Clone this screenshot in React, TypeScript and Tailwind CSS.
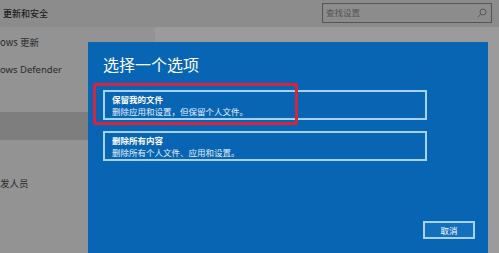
import React from 'react';

const cjk = { fontFamily: '"Noto Sans CJK SC", "Noto Sans", sans-serif' };

function SearchIcon() {
  return (
    <svg width="10" height="10" viewBox="0 0 10 10" fill="none" stroke="#5a5a5a" strokeWidth="1">
      <circle cx="6" cy="4" r="3" />
      <path d="M3.8 6.2 L0.8 9.2" />
    </svg>
  );
}

function OptionCard({ title, desc, highlighted }: { title: string; desc: string; highlighted?: boolean }) {
  return (
    <div className="relative">
      {highlighted && (
        <div className="absolute left-[-10px] top-[-7px] w-[205px] h-[42px] border-[3px] border-[#d3253e] rounded-[2px]" />
      )}
      <div className="w-[324px] h-[30px] border-2 border-[#a7d2f6] pl-[7px] flex flex-col justify-center">
        <div className="text-[8.5px] leading-[11px] font-bold text-white">{title}</div>
        <div className="text-[8.5px] leading-[12px] text-[#e4f0fb]">{desc}</div>
      </div>
    </div>
  );
}

export default function App() {
  return (
    <div className="relative w-[499px] h-[253px] overflow-hidden bg-[#9a9a9a]" style={cjk}>
      <div className="h-[27px] bg-[#8c8c8c] flex items-center justify-between pl-[3px] pr-[7px]">
        <span className="text-[9px] font-medium text-[#1e1e1e]">更新和安全</span>
        <div className="w-[170px] h-[20px] mt-[-2px] border border-[#555] flex items-center justify-between pl-[3px] pr-[4px]">
          <span className="text-[8.5px] text-[#555]">查找设置</span>
          <SearchIcon />
        </div>
      </div>
      <div className="flex h-[226px]">
        <div className="w-[155px] bg-[#939393] flex flex-col">
          <div className="h-[30px] flex items-center text-[9.5px] text-[#2a2a2a]">ows 更新</div>
          <div className="h-[26px] flex items-center text-[9.5px] text-[#2a2a2a]" style={{ fontFamily: '"Noto Sans", "Noto Sans CJK SC", sans-serif' }}>ows Defender</div>
          <div className="h-[29px]" />
          <div className="h-[28px] bg-[#7e7e7e]" />
          <div className="h-[38px]" />
          <div className="h-[10px] flex items-center text-[9.5px] text-[#2a2a2a]">发人员</div>
        </div>
        <div className="flex-1 bg-[#9b9b9b]" />
      </div>

      <div className="absolute left-[88px] top-[42px] w-[400px] h-[220px] bg-[#0865b3] pl-[15px] pr-[13px] pt-[10px] flex flex-col">
        <div className="text-[16px] leading-[24px] text-white">选择一个选项</div>
        <div className="mt-[14px] flex flex-col gap-[11px]">
          <OptionCard title="保留我的文件" desc="删除应用和设置，但保留个人文件。" highlighted />
          <OptionCard title="删除所有内容" desc="删除所有个人文件、应用和设置。" />
        </div>
        <div className="mt-[60px] flex justify-end">
          <div className="w-[52px] h-[18px] border-2 border-[#a7d2f6] bg-[#1470bd] flex items-center justify-center text-[8.5px] text-white">
            取消
          </div>
        </div>
      </div>
    </div>
  );
}
